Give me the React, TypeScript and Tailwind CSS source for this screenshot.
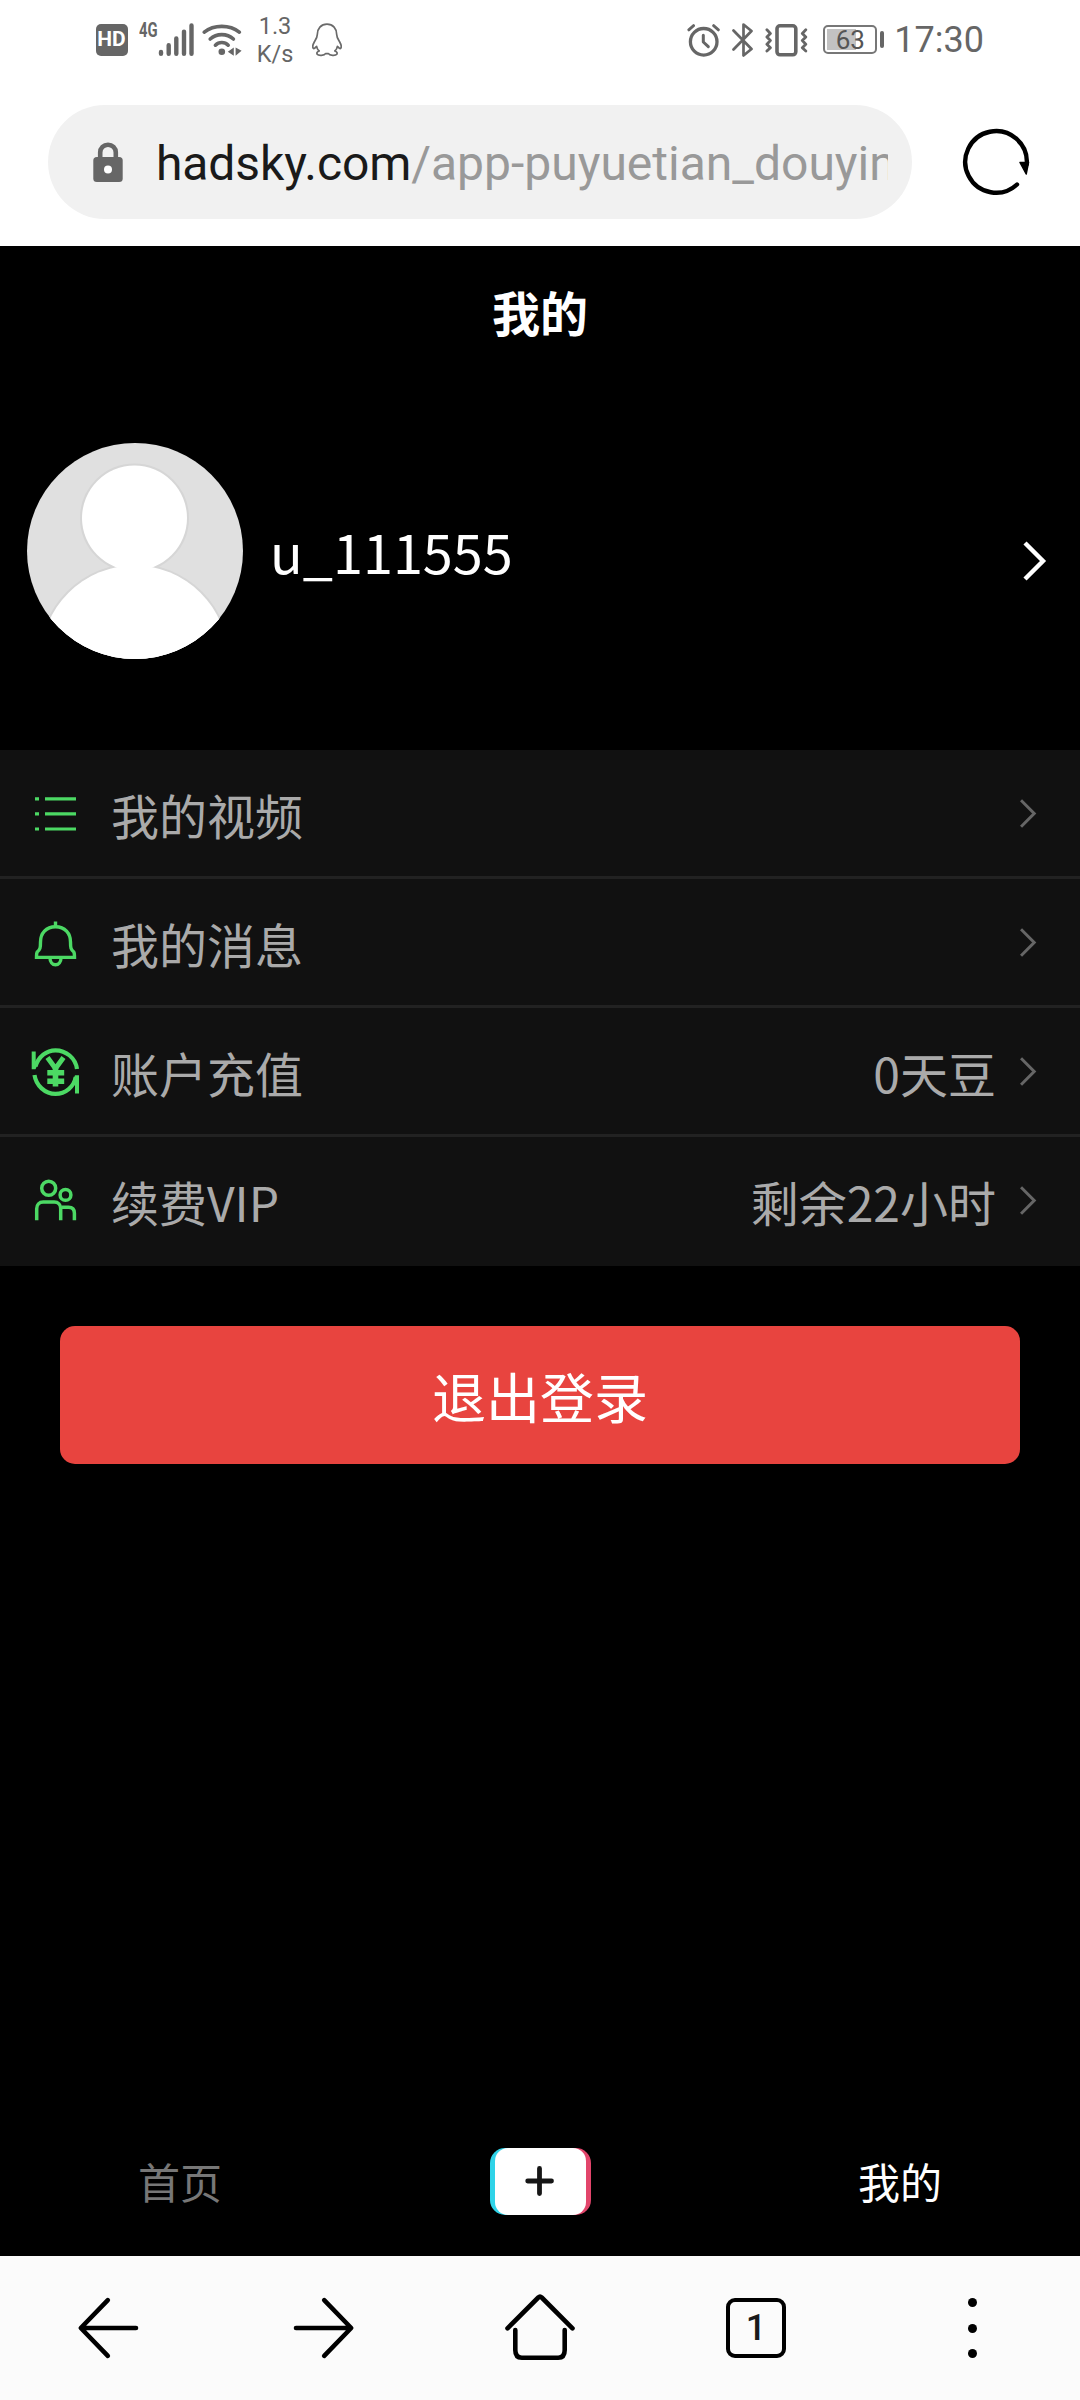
import type { ReactNode } from "react";

const SignalIcon = () => (
  <svg className="w-[36px] h-[34px]" viewBox="0 0 36 34" stroke="#666" strokeWidth="4.4" strokeLinecap="round">
    <path d="M3 29v1.8M10.7 22.3v8.5M18.3 15.5v15.3M26 8.6v22.2M33.5 2.4v28.4" />
  </svg>
);

const WifiIcon = () => (
  <svg className="w-[40px] h-[34px]" viewBox="0 0 40 34" fill="none" stroke="#666" strokeWidth="3.6" strokeLinecap="round">
    <path d="M2.3 9.2Q9.5 3.4 19.8 3.4T37.3 9.2" />
    <path d="M8.2 16Q13 11.6 19.8 11.6T31.4 16" />
    <path d="M13.4 22.2Q16 19.5 19.8 19.5T26.2 22.2" />
    <circle cx="19.8" cy="28.7" r="3.3" fill="#666" stroke="none" />
    <path d="M31.8 24.6v8.2l-6-4zM33.6 24.6v8.2l6-5z" fill="#666" stroke="none" />
  </svg>
);

const PenguinIcon = () => (
  <svg className="w-[30px] h-[34px]" viewBox="0 0 30 34" fill="none" stroke="#6a6a6a" strokeWidth="1.7" strokeLinejoin="round">
    <path d="M15 1.2C9 1.2 5.3 5.5 5.3 11.5C5.3 14.5 3.8 16.5 2.3 19C0.9 21.5 0.5 24.5 1.5 25.5C2.6 26 4 23.8 4.6 23.3C4.9 25.3 6 27 7.2 28C5 28.7 4.5 30 5.2 31.3C6.5 33 12.5 32.5 13.5 30.7H16.5C17.5 32.5 23.5 33 24.8 31.3C25.5 30 25 28.7 22.8 28C24 27 25.1 25.3 25.4 23.3C26 23.8 27.4 26 28.5 25.5C29.5 24.5 29.1 21.5 27.7 19C26.2 16.5 24.7 14.5 24.7 11.5C24.7 5.5 21 1.2 15 1.2Z" />
  </svg>
);

const AlarmIcon = () => (
  <svg className="w-[34px] h-[34px]" viewBox="0 0 34 34" fill="none" stroke="#666" strokeLinecap="round">
    <circle cx="16.7" cy="18.8" r="13.3" strokeWidth="3.3" />
    <path d="M16.3 12.3v6.7l5 4.7" strokeWidth="3" strokeLinejoin="round" />
    <path d="M1.8 6.9 6.6 2.6M31.4 6.9 26.6 2.6" strokeWidth="2.8" />
  </svg>
);

const BluetoothIcon = () => (
  <svg className="w-[22px] h-[36px]" viewBox="0 0 22 36" fill="none" stroke="#666" strokeWidth="2.7" strokeLinecap="round" strokeLinejoin="round">
    <path d="M1.5 8.5 19.5 27 11.5 33.5V2.5L19.5 9 1.5 27.5" />
  </svg>
);

const VibrateIcon = () => (
  <svg className="w-[43px] h-[34px]" viewBox="0 0 43 34" fill="none" stroke="#666" strokeLinejoin="round" strokeLinecap="round">
    <rect x="12" y="2.8" width="18.8" height="29" rx="3" strokeWidth="3.6" />
    <path d="M1.9 6.8l3.5 3.6-3.5 3.6 3.5 3.6-3.5 3.6 3.5 3.5-3.5 3.4M40.8 6.8l-3.5 3.6 3.5 3.6-3.5 3.6 3.5 3.6-3.5 3.5 3.5 3.4" strokeWidth="2.8" />
  </svg>
);

const Battery = () => (
  <div className="flex items-center gap-[3px]">
    <div className="w-[54px] h-[29px] rounded-[5px] border-2 border-[#777] p-[2px] relative">
      <div className="w-[29px] h-full bg-[#c2c2c2]" />
      <span className="absolute inset-0 flex items-center justify-center text-[26px] leading-none text-[#555]">63</span>
    </div>
    <div className="w-[4px] h-[17px] rounded-full bg-[#666]" />
  </div>
);

const StatusBar = () => (
  <div className="h-[78px] flex justify-between pt-px pl-[95.5px] pr-[96px] text-[#666]">
    <div className="flex items-center">
      <div className="w-[32px] h-[32px] rounded-[5px] bg-[#666] text-white text-[21px] font-bold flex items-center justify-center">HD</div>
      <span className="w-[30px] pl-[11px] pb-[20px] text-[20px] leading-none font-bold">
        <span className="inline-block origin-left scale-x-[0.74]">4G</span>
      </span>
      <SignalIcon />
      <div className="ml-[8.5px]">
        <WifiIcon />
      </div>
      <div className="ml-[13px] w-[40px] pt-px text-center text-[23.5px] leading-[28px]">
        <div>1.3</div>
        <div>K/s</div>
      </div>
      <div className="ml-[17px]">
        <PenguinIcon />
      </div>
    </div>
    <div className="flex items-center">
      <AlarmIcon />
      <div className="ml-[11px]">
        <BluetoothIcon />
      </div>
      <div className="ml-[11px]">
        <VibrateIcon />
      </div>
      <div className="ml-[15px]">
        <Battery />
      </div>
      <span className="ml-[10px] text-[36px] leading-none">17:30</span>
    </div>
  </div>
);

const AddressBar = () => (
  <div className="h-[168px] flex items-start pt-[27px] pl-[48px]">
    <div className="w-[864px] h-[114px] rounded-full bg-[#f1f1f1] flex items-center pl-[45px] pr-[24px]">
      <svg className="w-[30px] h-[40px] shrink-0" viewBox="0 0 30 40">
        <path d="M7.2 17V10.5a7.8 7.8 0 0 1 15.6 0V17" fill="none" stroke="#666" strokeWidth="4.6" />
        <rect x="0.3" y="15" width="29.4" height="25" rx="3.5" fill="#666" />
        <circle cx="15" cy="27.5" r="4" fill="#fff" />
      </svg>
      <div className="ml-[33px] pt-[3px] flex-1 overflow-hidden whitespace-nowrap text-[48px] leading-[64px] text-[#1a1a1a]">
        <span className="tracking-[-0.1px]">hadsky.com</span>
        <span className="text-[#999]">/app-puyuetian_douyin</span>
      </div>
    </div>
    <svg className="w-[72px] h-[72px] ml-[48px] mt-[21px]" viewBox="0 0 72 72">
      <path d="M57 58.5A30.8 30.8 0 1 1 66.8 38" fill="none" stroke="#000" strokeWidth="4.4" strokeLinecap="round" />
      <path d="M60 36.5h8.5l-2.3 11.5z" stroke="#000" strokeWidth="1.5" strokeLinejoin="round" />
    </svg>
  </div>
);

const Avatar = () => (
  <svg className="w-[216px] h-[216px] rounded-full shrink-0" viewBox="0 0 216 216">
    <rect width="216" height="216" fill="#e0e0e0" />
    <g fill="#fff" stroke="#d6d6d6" strokeWidth="3">
      <circle cx="107.5" cy="75" r="53" />
      <circle cx="107.5" cy="216" r="94" />
    </g>
    <g fill="#fff">
      <circle cx="107.5" cy="75" r="52.5" />
      <circle cx="107.5" cy="216" r="93.5" />
    </g>
  </svg>
);

const ListIcon = () => (
  <svg className="w-[50px] h-[50px]" viewBox="0 0 50 50" stroke="#4cd964" strokeWidth="3.2">
    <path d="M5 9.8h4M15 9.8h31M5 24.9h4M15 24.9h31M5 40h4M15 40h31" />
  </svg>
);

const BellIcon = () => (
  <svg className="w-[50px] h-[50px]" viewBox="0 0 50 50" fill="none" stroke="#4cd964" strokeWidth="3.4">
    <path d="M25.5 3.5V8" />
    <path d="M25.5 8.8C16 8.8 10.5 15.5 10.5 24c0 6-.3 7.5-3.3 10-.7 1-.7 2.5-.7 5.400h38c0-2.900 0-4.400-.7-5.400-3-2.500-3.300-4-3.300-10C40.500 15.500 35 8.800 25.500 8.800Z" />
    <path d="M20 40c0 4 2.500 6.800 5.500 6.800s5.500-2.800 5.500-6.800" />
  </svg>
);

const RechargeIcon = () => (
  <svg className="w-[50px] h-[50px]" viewBox="0 0 50 50" fill="none" stroke="#4cd964" strokeWidth="4.2">
    <path d="M5.5 19.5C8.5 9.5 16.5 3.3 25.5 3.3c10.5 0 20 7.7 21.500 18.700" />
    <path d="M4.500 28C6 38.500 15 46.900 25.500 46.900c10 0 18.500-7.200 20.200-16.900" />
    <path d="M1.700 4.500h4v10L11 9.700 5.500 22.300H1.700zM49 46.500h-4V36l-5 5 5-12.700h4z" fill="#4cd964" stroke="none" />
    <path d="M17.500 10.500 25.500 21.500 33.500 10.500" strokeWidth="5" />
    <path d="M25.500 20.500v19M17.300 25.700h16.900M17.300 34.200h16.900" strokeWidth="5.600" />
  </svg>
);

const PeopleIcon = () => (
  <svg className="w-[50px] h-[50px]" viewBox="0 0 50 50" fill="none" stroke="#4cd964" strokeWidth="3.500">
    <circle cx="18.700" cy="12.200" r="7" />
    <circle cx="35.500" cy="18.900" r="5.400" />
    <path d="M6.700 44.300V32.700c0-4 2.500-6.700 6.500-6.700h11c4 0 6.500 2.700 6.500 6.700v11.600" />
    <path d="M32 31.300h6.500c3.800 0 5.900 2.300 5.900 6v7" />
  </svg>
);

const menuItems: { icon: ReactNode; label: string; value?: string }[] = [
  { icon: <ListIcon />, label: "我的视频" },
  { icon: <BellIcon />, label: "我的消息" },
  { icon: <RechargeIcon />, label: "账户充值", value: "0天豆" },
  { icon: <PeopleIcon />, label: "续费VIP", value: "剩余22小时" },
];

const MenuList = () => (
  <div className="bg-[#111] text-[48px] leading-none text-[#aaa]">
    {menuItems.map((item) => (
      <div key={item.label} className="h-[129px] flex items-center pt-[2px] pl-[30px] pr-[43px] border-b-[3px] border-[#222] last:border-transparent">
        {item.icon}
        <span className="ml-[31px] flex-1">{item.label}</span>
        {item.value && <span>{item.value}</span>}
        <svg className="ml-[24px] mb-px w-[17px] h-[29px]" viewBox="0 0 17 29" fill="none" stroke="#666" strokeWidth="3">
          <path d="M1 1.2 14.2 14.5 1 27.8" />
        </svg>
      </div>
    ))}
  </div>
);

const TabBar = () => (
  <nav className="h-[150px] grid grid-cols-3 items-center text-center text-[42px] leading-none text-white">
    <span className="text-[#777]">首页</span>
    <div className="mx-auto w-[101px] h-[67px] rounded-[15px] overflow-hidden bg-linear-to-r from-[#2fd3e8] from-50% to-[#e2456b] to-50% pl-[5px] pr-[5px]">
      <div className="h-full rounded-[13px] bg-white flex items-center justify-center">
        <svg className="w-[30px] h-[32px]" viewBox="0 0 30 32" stroke="#161616" strokeWidth="4.8" strokeLinecap="round">
          <path d="M14.5 3.5v25M2.7 16h23.8" />
        </svg>
      </div>
    </div>
    <span>我的</span>
  </nav>
);

const BrowserBar = () => (
  <div className="h-[144px] grid grid-cols-5 items-center justify-items-center bg-[#fbfbfb]">
    <svg className="w-[64px] h-[64px]" viewBox="0 0 64 64" fill="none" stroke="#000" strokeWidth="4.6" strokeLinecap="round" strokeLinejoin="round">
      <path d="M31.8 4.2 4.8 32l27 27.8M5.5 32H60" />
    </svg>
    <svg className="w-[64px] h-[64px]" viewBox="0 0 64 64" fill="none" stroke="#000" strokeWidth="4.6" strokeLinecap="round" strokeLinejoin="round">
      <path d="M32.2 4.2 59.2 32l-27 27.8M58.5 32H4" />
    </svg>
    <svg className="w-[72px] h-[72px]" viewBox="0 0 72 72" fill="none" stroke="#000" strokeWidth="4.6" strokeLinecap="round" strokeLinejoin="round">
      <path d="M3.5 36.3 34.3 5.5q1.7-1.6 3.4 0L68.5 36.3" />
      <path d="M11.3 38v20q0 7.7 6.5 7.7h36.4q6.5 0 6.5-7.7V38" />
    </svg>
    <div className="w-[60px] h-[60px] rounded-[9px] border-4 border-black flex items-center justify-center text-[36px] leading-none font-medium text-[#1a1a1a]">1</div>
    <div className="flex flex-col gap-[16.5px]">
      <i className="w-[9px] h-[9px] rounded-full bg-black" />
      <i className="w-[9px] h-[9px] rounded-full bg-black" />
      <i className="w-[9px] h-[9px] rounded-full bg-black" />
    </div>
  </div>
);

export default function App() {
  return (
    <div className="w-[1080px] h-[2400px] overflow-hidden flex flex-col bg-white font-['Roboto','Noto_Sans_CJK_SC',sans-serif]">
      <StatusBar />
      <AddressBar />
      <main className="flex-1 flex flex-col bg-black text-white font-['Noto_Sans_CJK_SC',sans-serif]">
        <h1 className="h-[132px] flex items-center justify-center pb-[2px] text-[48px] font-bold">我的</h1>
        <div className="mt-[65px] h-[216px] flex items-center pl-[27px] pr-[33px]">
          <Avatar />
          <span className="ml-[27px] flex-1 text-[54px] leading-none">u_111555</span>
          <svg className="w-[24px] h-[42px] mt-[20px]" viewBox="0 0 24 42" fill="none" stroke="#fff" strokeWidth="4.4">
            <path d="M2 3 20 21 2 39" />
          </svg>
        </div>
        <div className="mt-[91px]">
          <MenuList />
        </div>
        <button className="mt-[60px] mx-[60px] h-[138px] rounded-[15px] bg-[#e8443f] pt-px text-[54px] leading-none">退出登录</button>
        <div className="flex-1" />
        <TabBar />
      </main>
      <BrowserBar />
    </div>
  );
}
